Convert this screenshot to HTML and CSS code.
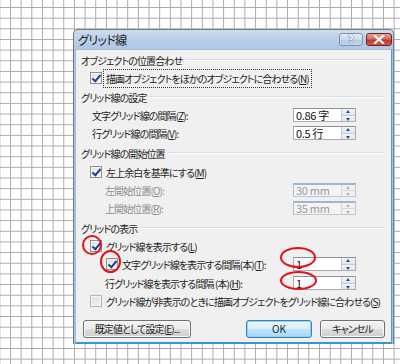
FILE: index.html
```html
<!DOCTYPE html>
<html lang="ja">
<head>
<meta charset="utf-8">
<title>グリッド線</title>
<link rel="stylesheet" href="styles.css">
</head>
<body>
<div class="page">
  <div class="dialog">
    <div class="titlebar">
      <span class="title">グリッド線</span>
      <div class="tbtns">
        <span class="tb help">?</span>
        <span class="tb close"><svg width="12" height="9" viewBox="0 0 12 9"><path d="M2 1 L10 8 M10 1 L2 8" stroke="#fff" stroke-width="2.2" stroke-linecap="square"/></svg></span>
      </div>
    </div>
    <div class="body">
      <div class="ghead g1"><span>オブジェクトの位置合わせ</span><i></i></div>
      <div class="row cbrow ind1"><span class="cb on"></span><span class="focus">描画オブジェクトをほかのオブジェクトに合わせる(<u>N</u>)</span></div>

      <div class="ghead g2"><span>グリッド線の設定</span><i></i></div>
      <div class="row field lab1"><span class="lbl">文字グリッド線の間隔(<u>Z</u>):</span><div class="spin"><span class="val">0.86 字</span><span class="arr"><b class="up"></b><b class="dn"></b></span></div></div>
      <div class="row field lab1"><span class="lbl">行グリッド線の間隔(<u>V</u>):</span><div class="spin"><span class="val">0.5 行</span><span class="arr"><b class="up"></b><b class="dn"></b></span></div></div>

      <div class="ghead g3"><span>グリッド線の開始位置</span><i></i></div>
      <div class="row cbrow ind1 r-m"><span class="cb on"></span><span class="txt">左上余白を基準にする(<u>M</u>)</span></div>
      <div class="row field lab2 dis"><span class="lbl">左開始位置(<u>O</u>):</span><div class="spin off"><span class="val">30 mm</span><span class="arr"><b class="up"></b><b class="dn"></b></span></div></div>
      <div class="row field lab2 dis"><span class="lbl">上開始位置(<u>R</u>):</span><div class="spin off"><span class="val">35 mm</span><span class="arr"><b class="up"></b><b class="dn"></b></span></div></div>

      <div class="ghead g4"><span>グリッドの表示</span><i></i></div>
      <div class="row cbrow ind1 r-l"><span class="cb on"></span><span class="txt">グリッド線を表示する(<u>L</u>)</span></div>
      <div class="row field ind2"><span class="cb on"></span><span class="lbl t2">文字グリッド線を表示する間隔(本)(<u>T</u>):</span><div class="spin"><span class="val">1</span><span class="arr"><b class="up"></b><b class="dn"></b></span></div></div>
      <div class="row field lab2 r-h"><span class="lbl">行グリッド線を表示する間隔 (本)(<u>H</u>):</span><div class="spin"><span class="val">1</span><span class="arr"><b class="up"></b><b class="dn"></b></span></div></div>
      <div class="row cbrow ind1"><span class="cb offbox"></span><span class="txt">グリッド線が非表示のときに描画オブジェクトをグリッド線に合わせる(<u>S</u>)</span></div>

      <div class="btns">
        <button class="btn def">既定値として設定(<u>E</u>)...</button>
        <span class="spacer"></span>
        <button class="btn ok">OK</button>
        <button class="btn cancel">キャンセル</button>
      </div>
    </div>
  </div>

  <span class="mark m1"></span>
  <span class="mark m2"></span>
  <span class="mark m3"></span>
  <span class="mark m4"></span>
</div>
</body>
</html>
```

FILE: styles.css
```css
html, body {
  margin: 0;
  padding: 0;
}
body {
  width: 400px;
  height: 364px;
  overflow: hidden;
  background-color: #ffffff;
  background-image:
    linear-gradient(to right, #a9a9a9 1px, transparent 1px),
    linear-gradient(to bottom, #a9a9a9 1px, transparent 1px);
  background-size: 10.67px 10.67px;
  background-position: 10px 7px;
  font-family: "Noto Sans CJK JP", "Noto Sans", sans-serif;
  font-size: 10px;
  font-feature-settings: "palt";
  letter-spacing: -0.9px;
  color: #1e1e1e;
  white-space: nowrap;
}
.page {
  position: relative;
  width: 400px;
  height: 364px;
  padding: 29px 0 0 73px;
  box-sizing: border-box;
}
.dialog {
  width: 321px;
  height: 315px;
  box-sizing: border-box;
  border: 1px solid #6b7c92;
  border-bottom: none;
  border-radius: 5px 5px 0 0;
  background: linear-gradient(to bottom, #cddcee 0, #b9cfe8 10px, #adc6e4 20px, #a9c3e2 100%);
  display: flex;
  flex-direction: column;
}
.titlebar {
  height: 19px;
  display: flex;
  align-items: center;
  padding-left: 4px;
  flex: none;
}
.title {
  font-size: 12px;
  color: #1a1a1a;
  letter-spacing: -0.6px;
}
.tbtns {
  margin-left: auto;
  display: flex;
  gap: 3px;
  padding-right: 1px;
  align-self: flex-start;
  margin-top: 3px;
}
.tb {
  height: 13px;
  border-radius: 3px;
  box-sizing: border-box;
  display: flex;
  align-items: center;
  justify-content: center;
}
.help {
  width: 24px;
  border: 1px solid #7d93b1;
  background: linear-gradient(to bottom, #e3ecf7 0, #c9d9ec 50%, #b4c9e3 51%, #c2d5ea 100%);
  color: #ffffff;
  font-family: "DejaVu Sans", sans-serif;
  font-weight: bold;
  font-size: 10px;
  letter-spacing: 0;
  text-shadow: 0 0 1px #3b4f6e, 0 0 1px #3b4f6e;
  line-height: 11px;
}
.close {
  width: 26px;
  border: 1px solid #6b2525;
  background: linear-gradient(to bottom, #e8a496 0, #d26e5e 45%, #c0382a 55%, #cc5a45 100%);
}
.body {
  flex: 1;
  margin: 0 1px 0 1px;
  background: #f0f0f0;
  border: 1px solid #a4bbd6;
  border-bottom: 2px solid #3897cc;
  border-right: 1px solid #4a9bd0;
  padding: 1px 5px 0 5px;
  display: flex;
  flex-direction: column;
}
.ghead {
  height: 18px;
  display: flex;
  align-items: center;
  color: #1e1e1e;
}
.ghead i {
  flex: 1;
  height: 1px;
  background: #d4dfea;
  margin: 0 1px 0 3px;
  border-bottom: 1px solid #fafcfd;
}
.g1 { margin-top: 0; }
.g2 { margin-top: 1px; }
.g3 { margin-top: 2px; }
.g4 { margin-top: 2px; }
.row {
  height: 18px;
  display: flex;
  align-items: center;
}
.ind1 { padding-left: 9px; }
.ind2 { padding-left: 25px; }
.lab1 { padding-left: 11px; }
.lab2 { padding-left: 24px; }
.r-m { margin-top: 1px; }
.r-l { margin-top: 0; }
.r-h { margin-top: 1px; }
.cb {
  flex: none;
  width: 12px;
  height: 12px;
  box-sizing: border-box;
  border: 1px solid #8e8f8f;
  background: linear-gradient(135deg, #dcdcdc 0, #f4f4f4 60%, #ffffff 100%);
  box-shadow: inset 0 0 0 1px #f6f6f6;
  position: relative;
  margin-right: 3px;
}
.cb.on::after {
  content: "";
  position: absolute;
  left: 3px;
  top: 0px;
  width: 3px;
  height: 7px;
  border: solid #1f3f8f;
  border-width: 0 2px 2px 0;
  transform: rotate(40deg);
}
.cb.offbox {
  border-color: #b5b5b5;
  background: linear-gradient(135deg, #e2e2e2 0, #eeeeee 100%);
}
.focus {
  outline: 1px dotted #333;
  outline-offset: 1px;
  padding: 0 1px;
}
.txt { padding-left: 1px; }
.lbl { flex: none; }
.dis .lbl { color: #8d8d8d; }
.spin {
  margin-left: auto;
  margin-right: 30px;
  width: 63px;
  height: 14px;
  box-sizing: border-box;
  border: 1px solid #abadb3;
  border-top-color: #8c9097;
  background: #ffffff;
  display: flex;
  align-items: stretch;
}
.spin .val {
  flex: 1;
  line-height: 12px;
  padding-left: 2px;
  font-size: 11px;
  letter-spacing: -0.3px;
  color: #111;
}
.spin .arr {
  width: 13px;
  display: flex;
  flex-direction: column;
  border-left: 1px solid #c5ccd6;
}
.spin .arr b {
  flex: 1;
  position: relative;
  background: linear-gradient(to bottom, #f2f5f9, #dde5ef);
  border-bottom: 1px solid #c5ccd6;
}
.spin .arr b.dn { border-bottom: none; }
.spin .arr b::after {
  content: "";
  position: absolute;
  left: 4px;
  top: 1px;
  border-left: 2.5px solid transparent;
  border-right: 2.5px solid transparent;
}
.spin .arr b.up::after { border-bottom: 3px solid #2a4f8f; }
.spin .arr b.dn::after { border-top: 3px solid #2a4f8f; top: 2px; }
.spin.off {
  border-color: #bcc7d6;
  border-top: 2px solid #9db6d6;
  border-left-color: #a9bdd8;
  background: #f4f4f4;
}
.spin.off .val { color: #9a9a9a; line-height: 11px; }
.spin.off .arr { border-left-color: #d6d6d6; }
.spin.off .arr b { background: #f1f1f1; border-color: #dadada; }
.spin.off .arr b.up::after { border-bottom-color: #b6b6b6; }
.spin.off .arr b.dn::after { border-top-color: #b6b6b6; }
.t2 { padding-left: 1px; }
.btns {
  margin-top: 10px;
  display: flex;
  align-items: center;
  padding-left: 2px;
  padding-right: 1px;
}
.spacer { flex: 1; }
.btn {
  height: 18px;
  box-sizing: border-box;
  border: 1px solid #707070;
  border-radius: 3px;
  background: linear-gradient(to bottom, #f2f2f2 0, #ebebeb 50%, #dddddd 51%, #cfcfcf 100%);
  font-family: inherit;
  font-size: 10px;
  font-feature-settings: "palt";
  letter-spacing: -0.9px;
  color: #1e1e1e;
  padding: 0;
  line-height: 16px;
  box-shadow: inset 0 0 0 1px #f8f8f8;
}
.btn.def { width: 108px; }
.btn.ok {
  width: 66px;
  border-color: #3c7fb1;
  box-shadow: inset 0 0 0 1px #8fd3f4;
  background: linear-gradient(to bottom, #eaf6fd 0, #d9f0fc 50%, #bee6fd 51%, #a7d9f5 100%);
  margin-right: 8px;
  letter-spacing: 0;
}
.btn.cancel { width: 65px; }
.mark {
  position: absolute;
  box-sizing: border-box;
  border: 2px solid #e5101a;
  border-radius: 50%;
}
.m1 { left: 82px; top: 235px; width: 20px; height: 20px; }
.m2 { left: 100px; top: 250px; width: 21px; height: 23px; }
.m3 { left: 280px; top: 247px; width: 36px; height: 21px; }
.m4 { left: 280px; top: 271px; width: 37px; height: 19px; }
```
